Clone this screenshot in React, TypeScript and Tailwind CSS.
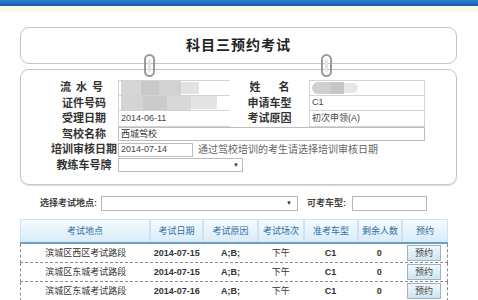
import React from 'react';

const font = { fontFamily: '"Liberation Sans", "Noto Sans CJK SC", sans-serif' };

const cols = [
  { label: '考试地点', w: 'w-[130px]' },
  { label: '考试日期', w: 'w-[53px]' },
  { label: '考试原因', w: 'w-[55px]' },
  { label: '考试场次', w: 'w-[46px]' },
  { label: '准考车型', w: 'w-[54px]' },
  { label: '剩余人数', w: 'w-[44px]' },
  { label: '预约', w: 'w-[46px]' },
];

const rows = [
  { place: '滨城区西区考试路段', date: '2014-07-15' },
  { place: '滨城区东城考试路段', date: '2014-07-15' },
  { place: '滨城区东城考试路段', date: '2014-07-16' },
];

const Ring = ({ x }: { x: string }) => (
  <div className={`absolute top-[54px] ${x} w-[11px] h-[23px] rounded-full border-2 border-[#9a9a9a] bg-transparent`}>
    <div className="mx-auto mt-[3px] w-[3px] h-[13px] rounded-full bg-[#e4e4e4]" />
  </div>
);

const Label = ({ children }: { children: React.ReactNode }) => (
  <div className="flex items-center justify-center text-[11px] font-bold text-[#333] leading-none">{children}</div>
);

const Cell = ({ children, className = '' }: { children?: React.ReactNode; className?: string }) => (
  <div className={`flex items-center border-b border-[#d4d4d4] text-[9px] text-[#444] pl-[2px] leading-none ${className}`}>{children}</div>
);

export default function App() {
  return (
    <div className="relative w-[478px] h-[300px] overflow-hidden bg-white" style={font}>
      <div className="h-[6px] bg-gradient-to-b from-[#2f80d0] to-[#1259a8]" />
      <div className="h-[6px] bg-[#f7f9f0]" />

      <div className="px-[20px]">
        <div className="mt-[15px] h-[37px] w-[437px] rounded-[9px] border border-[#c4c4c4] flex items-center justify-center">
          <span className="text-[14px] font-bold text-[#222] tracking-[1px]">科目三预约考试</span>
        </div>

        <div className="mt-[5px] h-[116px] w-[437px] rounded-[9px] border border-[#c4c4c4] shadow-[0_1px_1px_#ddd] pt-[10px] pl-[29px]">
          <div className="grid grid-cols-[68px_112px_79px_116px] auto-rows-[15.5px]">
            <Label><span className="tracking-[5px]">流水号</span></Label>
            <Cell className="border-t border-l gap-0 pl-0">
              <div className="h-[14px] w-[20px] bg-[#d6d6d6]" />
              <div className="h-[14px] w-[18px] bg-[#c9c9c9]" />
              <div className="h-[14px] w-[22px] bg-[#d2d2d2]" />
              <div className="h-[12px] w-[18px] bg-[#e2e2e2]" />
            </Cell>
            <Label><span>姓</span><span className="ml-[18px]">名</span></Label>
            <Cell className="border-t border-l border-r pl-0">
              <div className="h-[12px] w-[18px] rounded-l-full bg-[#cfcfcf]" />
              <div className="h-[12px] w-[14px] bg-[#c6c6c6]" />
              <div className="h-[10px] w-[14px] rounded-r-full bg-[#e6e6e6]" />
            </Cell>

            <Label>证件号码</Label>
            <Cell className="border-l pl-0">
              <div className="h-[14px] w-[22px] bg-[#d4d4d4]" />
              <div className="h-[14px] w-[24px] bg-[#cbcbcb]" />
              <div className="h-[14px] w-[24px] bg-[#d8d8d8]" />
              <div className="h-[13px] w-[26px] bg-[#e4e4e4]" />
            </Cell>
            <Label>申请车型</Label>
            <Cell className="border-l border-r">C1</Cell>

            <Label>受理日期</Label>
            <Cell className="border-l">2014-06-11</Cell>
            <Label>考试原因</Label>
            <Cell className="border-l border-r">初次申领(A)</Cell>

            <Label>驾校名称</Label>
            <div className="col-span-3 flex items-center">
              <div className="h-[14px] w-[310px] border border-[#bdbdbd] flex items-center pl-[2px] text-[9px] text-[#333] leading-none">西城驾校</div>
            </div>

            <Label>培训审核日期</Label>
            <div className="col-span-3 flex items-center gap-[5px]">
              <div className="h-[14px] w-[75px] border border-[#bdbdbd] flex items-center pl-[2px] text-[9px] text-[#444] leading-none">2014-07-14</div>
              <span className="text-[10px] text-[#666] leading-none">通过驾校培训的考生请选择培训审核日期</span>
            </div>

            <Label>教练车号牌</Label>
            <div className="col-span-3 flex items-center">
              <div className="h-[14px] w-[125px] border border-[#bdbdbd] flex items-center justify-end pr-[3px] text-[6px] text-[#333]">▼</div>
            </div>
          </div>
        </div>
      </div>

      <Ring x="left-[144px]" />
      <Ring x="left-[321px]" />

      <div className="mt-[11px] flex items-center h-[15px] pl-[40px]">
        <span className="text-[9px] font-bold text-[#444] leading-none">选择考试地点:</span>
        <div className="ml-[4px] h-[15px] w-[197px] border border-[#b5b5b5] flex items-center justify-end pr-[5px] text-[6px] text-[#333]">▼</div>
        <span className="ml-[9px] text-[9px] font-bold text-[#444] leading-none">可考车型:</span>
        <div className="ml-[6px] h-[15px] w-[75px] border border-[#b5b5b5]" />
      </div>

      <div className="mt-[8px] ml-[20px] w-[428px]">
        <div className="flex h-[25px] border-b-2 border-[#6f9cc2]">
          {cols.map(c => (
            <div key={c.label} className={`${c.w} flex items-center justify-center border-x border-t border-[#cfe2ee] bg-gradient-to-b from-[#f5fbff] to-[#d7ecf8] text-[9px] text-[#2f6d9e] leading-none`}>
              {c.label}
            </div>
          ))}
        </div>
        {rows.map((r, i) => (
          <div key={i} className="flex h-[19px] border-b border-dashed border-[#8a8a8a] border-x text-[9px] text-[#333] leading-none">
            <div className="w-[130px] flex items-center justify-center">{r.place}</div>
            <div className="w-[53px] flex items-center justify-center font-bold">{r.date}</div>
            <div className="w-[55px] flex items-center justify-center font-bold">A;B;</div>
            <div className="w-[46px] flex items-center justify-center">下午</div>
            <div className="w-[54px] flex items-center justify-center font-bold">C1</div>
            <div className="w-[44px] flex items-center justify-center font-bold">0</div>
            <div className="w-[46px] flex items-center justify-center">
              <div className="h-[16px] w-[34px] border border-[#9fb4c2] bg-gradient-to-b from-[#f0f8fc] to-[#cfe5f1] flex items-center justify-center text-[9px] text-[#444]">预约</div>
            </div>
          </div>
        ))}
      </div>
    </div>
  );
}
